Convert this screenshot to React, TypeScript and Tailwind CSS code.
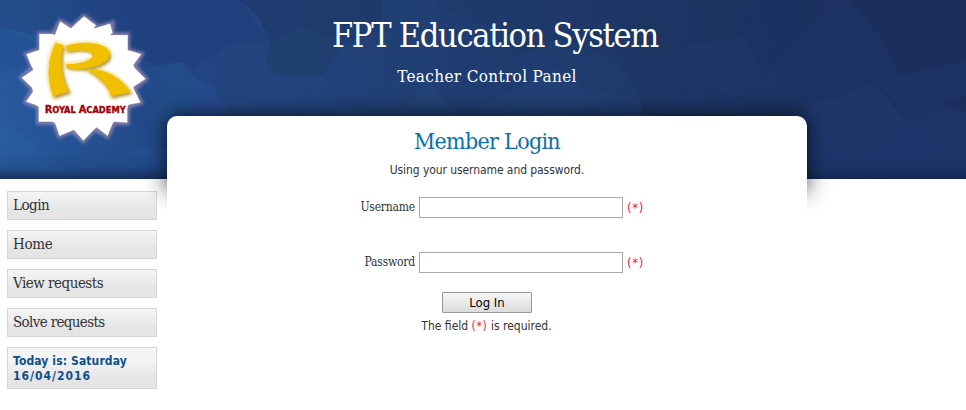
import React from "react";

const navItems = [
  { label: "Login", tracking: "tracking-[-0.5px]" },
  { label: "Home", tracking: "tracking-[-0.3px]" },
  { label: "View requests", tracking: "tracking-[-0.5px]" },
  { label: "Solve requests", tracking: "tracking-[-0.65px]" },
];

function BannerBackdrop() {
  return (
    <svg className="absolute left-0 top-0" width="966" height="179" viewBox="0 0 966 179" aria-hidden="true">
      <defs>
        <linearGradient id="sky" x1="0" y1="179" x2="966" y2="0" gradientUnits="userSpaceOnUse">
          <stop offset="0" stopColor="#285b9f" />
          <stop offset="0.16" stopColor="#224988" />
          <stop offset="0.42" stopColor="#203f74" />
          <stop offset="0.65" stopColor="#1e3768" />
          <stop offset="1" stopColor="#1b2e5e" />
        </linearGradient>
        <linearGradient id="edge" x1="0" y1="0" x2="0" y2="1">
          <stop offset="0" stopColor="#12264e" stopOpacity="0" />
          <stop offset="0.6" stopColor="#12264e" stopOpacity="0.2" />
          <stop offset="1" stopColor="#101f45" stopOpacity="0.7" />
        </linearGradient>
      </defs>
      <rect width="966" height="179" fill="url(#sky)" />
      <g opacity=".65">
        <path d="M0 0H72L108 22L136 54L160 65L148 68L120 40L63 27L50 37L0 28Z" fill="#203b73" fillOpacity=".55" />
        <path d="M0 28L22 36L50 57L0 73Z" fill="#204a8c" fillOpacity=".5" />
        <path d="M142 53L158 66L182 62L160 65V179H116L152 143Z" fill="#255497" fillOpacity=".3" />
        <path d="M0 125L28 137L50 158L74 178V179H0Z" fill="#2d62a6" fillOpacity=".45" />
        <path d="M50 158L120 154L153 144L167 150V179H74Z" fill="#265597" fillOpacity=".5" />
        <path d="M72 0H240L258 27L271 41L229 44L192 69L182 62L160 66L130 54L108 22Z" fill="#1f3b79" fillOpacity=".8" />
        <path d="M240 0H382L380 30L344 44L304 25L271 41L258 17Z" fill="#1d3663" fillOpacity=".75" />
        <path d="M160 65L182 62L192 76L192 110L170 125L160 111Z" fill="#22528f" fillOpacity=".7" />
        <path d="M192 76L213 87L229 112L222 125H192Z" fill="#2b509b" fillOpacity=".6" />
        <path d="M192 69L229 44L266 61L274 75L323 75L333 107L278 116H230L213 87L192 76Z" fill="#25457f" fillOpacity=".55" />
        <path d="M271 41L304 25L344 44L323 75L274 75L266 61Z" fill="#203d68" fillOpacity=".75" />
        <path d="M333 107L395 114L430 80L456 116H333Z" fill="#284b80" fillOpacity=".45" />
        <path d="M380 30L392 0H435L446 46L430 80L386 53Z" fill="#244776" fillOpacity=".3" />
        <path d="M435 0H600L631 15L617 39L587 59L559 38L520 55L500 26L466 21Z" fill="#1d3867" fillOpacity=".6" />
        <path d="M520 55L559 38L616 59L641 99L641 116H500L528 92Z" fill="#284d83" fillOpacity=".25" />
        <path d="M480 105L560 68L578 88L641 99L642 116H480Z" fill="#2a528b" fillOpacity=".25" />
        <path d="M625 17L680 0H751L741 35L684 47L663 62L640 58Z" fill="#1b3460" fillOpacity=".65" />
        <path d="M684 47L744 37L766 75L735 101L684 66Z" fill="#20386c" fillOpacity=".5" />
        <path d="M751 0L825 0L805 31L766 75L741 35Z" fill="#1a3060" fillOpacity=".7" />
        <path d="M805 31L851 0L884 42L899 75L872 82L832 101L820 98L800 78Z" fill="#1c3566" fillOpacity=".7" />
        <path d="M851 0H966V61L947 63L899 75L884 42Z" fill="#1b2d5b" fillOpacity=".75" />
        <path d="M872 82L899 75L966 61V95L941 104L907 121L894 101Z" fill="#1e356a" fillOpacity=".85" />
        <path d="M820 98L832 101L872 82L907 121L886 148L850 158L810 135L807 110Z" fill="#1f3f76" fillOpacity=".6" />
        <path d="M907 121L941 104L966 112V154L929 143Z" fill="#1f3c74" fillOpacity=".6" />
        <path d="M807 135L850 158L886 148L907 121L929 143L966 154V179H807Z" fill="#1e3f79" fillOpacity=".7" />
      </g>
      <rect y="151" width="966" height="28" fill="url(#edge)" />
    </svg>
  );
}

function Logo() {
  return (
    <svg className="block" width="167" height="179" viewBox="0 0 501 537" aria-label="Royal Academy">
      <defs>
        <filter id="soft" x="-20%" y="-20%" width="140%" height="140%">
          <feGaussianBlur stdDeviation="5" />
        </filter>
      </defs>
      <path
        d="M252 48L290 77L285 84L338 68L337 103H384V150L426 162L404 198L438 237L403 266L423 308L383 320V369L342 369L323 409L285 387L250 423L216 392L178 409L163 368H115V323L77 305L98 268L64 233L98 203L78 162L118 149V101H160L180 63L217 81Z"
        fill="#b5a7cc"
        stroke="#a596c0"
        strokeWidth="13"
        opacity=".65"
        filter="url(#soft)"
      />
      <path
        d="M252 48L289 76L283 84L331 70L339 99L332 104H384V150L390 151L425 162L401 195L406 205L438 237L401 261L404 270L423 308L386 315L383 325V369L342 366L338 373L323 409L290 383L282 390L250 423L222 391L214 394L178 409L165 371L158 366H115V321L110 317L77 305L98 275L95 263L64 233L99 209L94 200L78 162L117 149V101H158L164 104L180 63L213 84L219 78Z"
        fill="white"
        stroke="#77618f"
        strokeWidth="1.5"
      />
      <g fill="#f5dc70" stroke="#f5dc70" strokeWidth="13" filter="url(#soft)" opacity=".7">
        <path d="M167 128L190 136C178 181 183 230 207 275L160 291C140 234 141 174 167 128Z" />
        <path d="M199 139C260 118 329 134 329 164C328 196 255 214 199 202V192C238 193 280 181 281 165C281 149 237 145 200 154Z" />
        <path d="M258 209C318 201 369 241 391 277L333 290C328 258 293 226 258 209Z" />
      </g>
      <g fill="#8f7320" opacity=".65" filter="url(#soft)" transform="translate(5 6)">
        <path d="M167 128L190 136C178 181 183 230 207 275L160 291C140 234 141 174 167 128Z" />
        <path d="M199 139C260 118 329 134 329 164C328 196 255 214 199 202V192C238 193 280 181 281 165C281 149 237 145 200 154Z" />
        <path d="M258 209C318 201 369 241 391 277L333 290C328 258 293 226 258 209Z" />
      </g>
      <g fill="#f0c000">
        <path d="M167 128L190 136C178 181 183 230 205 275L160 289C138 234 143 174 167 128Z" />
        <path d="M199 137C260 118 329 132 329 162C328 196 255 214 199 204V192C238 193 276 181 277 167C277 151 237 148 200 155Z" />
        <path d="M258 209C318 201 369 241 391 277L333 289C328 258 293 226 258 209Z" />
      </g>
      <text x="134" y="340" textLength="243" lengthAdjust="spacingAndGlyphs" fill="#a00008" stroke="#a00008" strokeWidth="1" fontFamily="'DejaVu Sans Condensed', 'DejaVu Sans', sans-serif" fontWeight="700">
        <tspan fontSize="31">R</tspan><tspan fontSize="26">OYAL </tspan><tspan fontSize="31">A</tspan><tspan fontSize="26">CADEMY</tspan>
      </text>
    </svg>
  );
}

function Required() {
  return <span className="tracking-[0.7px] text-[#f5174b]">(*)</span>;
}

function Field({ label, type }: { label: string; type: string }) {
  return (
    <label className="flex h-[21px] items-center">
      <span className="mr-1 w-[248px] whitespace-nowrap text-right font-['DejaVu_Serif_Condensed','DejaVu_Serif',serif] text-[12px] leading-[15px] tracking-[-0.2px] text-[#333]">
        {label}
      </span>
      <input type={type} className="h-[21px] w-[204px] border border-[#a9a9a9] bg-white px-1 outline-none" />
      <span className="ml-1 text-[13px]"><Required /></span>
    </label>
  );
}

export default function App() {
  return (
    <div className="relative h-[410px] w-[966px] overflow-hidden bg-white font-['DejaVu_Sans_Condensed','DejaVu_Sans',sans-serif] text-[12px] text-[#333]">
      <BannerBackdrop />
      <div className="relative flex h-full">
        <aside className="w-[167px] shrink-0">
          <Logo />
          <nav className="flex flex-col gap-[10px] pl-[7px] pt-3">
            {navItems.map((item) => (
              <a
                key={item.label}
                className={`flex h-[29px] w-[150px] items-center border border-[#d5d5d5] bg-linear-to-b from-[#f5f5f5] to-[#e5e5e5] to-70% pb-px pl-[5px] font-['DejaVu_Serif_Condensed','DejaVu_Serif',serif] text-[15px] leading-[18px] ${item.tracking}`}
              >
                {item.label}
              </a>
            ))}
            <div className="h-[42px] w-[150px] whitespace-nowrap border border-[#d5d5d5] bg-linear-to-b from-[#f5f5f5] from-30% to-[#e5e5e5] to-75% pl-[5px] pt-[6px] text-[12px] font-bold leading-[15px] text-[#0c4f8d]">
              <span className="tracking-[0.12px]">Today is: Saturday</span>
              <br />
              <span className="tracking-[1px]">16/04/2016</span>
            </div>
          </nav>
        </aside>
        <main className="w-[640px] shrink-0">
          <header className="h-[116px] pt-[14px] text-center font-['DejaVu_Serif_Condensed','DejaVu_Serif',serif] text-white">
            <h1 className="whitespace-nowrap pl-[16px] text-[34px] leading-[42px] tracking-[-1.3px]">FPT Education System</h1>
            <h2 className="mt-[9px] text-[17px] leading-[22px] tracking-[0.35px]">Teacher Control Panel</h2>
          </header>
          <div className="relative h-[294px]">
            <div className="absolute inset-x-0 top-0 h-[75px] rounded-t-[12px] shadow-[0_0_22px_0_rgba(0,0,0,0.75)]" />
            <section className="relative h-full rounded-t-[10px] bg-white pt-[10px]">
              <h3 className="text-center font-['DejaVu_Serif_Condensed','DejaVu_Serif',serif] text-[23px] leading-[30px] tracking-[-0.7px] text-[#0b6fa9]">Member Login</h3>
              <p className="mt-[6px] text-center leading-4 tracking-[-0.08px]">Using your username and password.</p>
              <form className="mt-[19px]">
                <Field label="Username" type="text" />
                <div className="mt-[34px]">
                  <Field label="Password" type="password" />
                </div>
                <button type="button" className="mx-auto mt-[19px] block h-[21px] w-[90px] rounded-[1px] border border-[#999] bg-linear-to-b from-[#f6f6f6] to-[#dcdcdc] text-[13px] leading-[18px] text-black">
                  Log In
                </button>
                <p className="mt-[5px] pr-[1px] text-center leading-4">
                  The field <Required /> is required.
                </p>
              </form>
            </section>
          </div>
        </main>
      </div>
    </div>
  );
}
